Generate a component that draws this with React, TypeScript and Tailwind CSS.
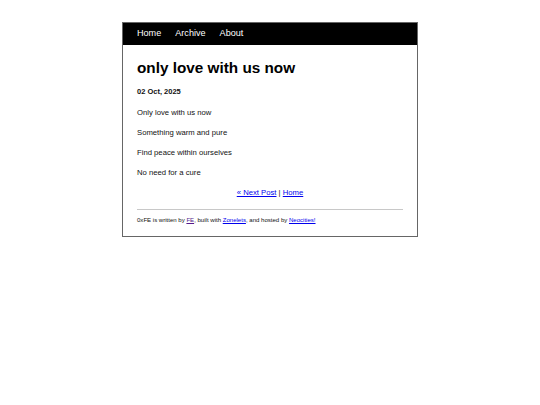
export default function App() {
  const lines = ['Only love with us now', 'Something warm and pure', 'Find peace within ourselves', 'No need for a cure'];
  return (
    <div className="min-h-[405px] bg-white pt-[22px] font-['Liberation_Sans',Arial,sans-serif] text-[#111]">
      <div className="mx-auto w-[296px] border border-[#666]">
        <nav className="flex h-[22px] items-center gap-[14px] bg-black px-[14px] text-[9.1px] text-white">
          <a>Home</a>
          <a>Archive</a>
          <a>About</a>
        </nav>
        <main className="px-[14px] pb-[11px]">
          <h1 className="mt-[12px] text-[15.3px] leading-[22px] font-bold text-black">only love with us now</h1>
          <h4 className="mt-[7px] text-[7.5px] leading-[12px] font-bold">02 Oct, 2025</h4>
          <div className="mt-[8.5px] text-[7.7px] leading-[11px]">
            {lines.map((l) => (
              <p key={l} className="mb-[9px]">{l}</p>
            ))}
          </div>
          <p className="text-center text-[7.7px] leading-[11px]">
            <a className="text-[#0000ee] underline">« Next Post</a> | <a className="text-[#0000ee] underline">Home</a>
          </p>
          <hr className="mt-[11.5px] border-[#c8c8c8]" />
          <footer className="mt-[6px] text-[6.05px] leading-[9px]">
            0xFE is written by <a className="text-[#551a8b] underline">FE</a>, built with{' '}
            <a className="text-[#0000ee] underline">Zonelets</a>, and hosted by{' '}
            <a className="text-[#0000ee] underline">Neocities!</a>
          </footer>
        </main>
      </div>
    </div>
  );
}
